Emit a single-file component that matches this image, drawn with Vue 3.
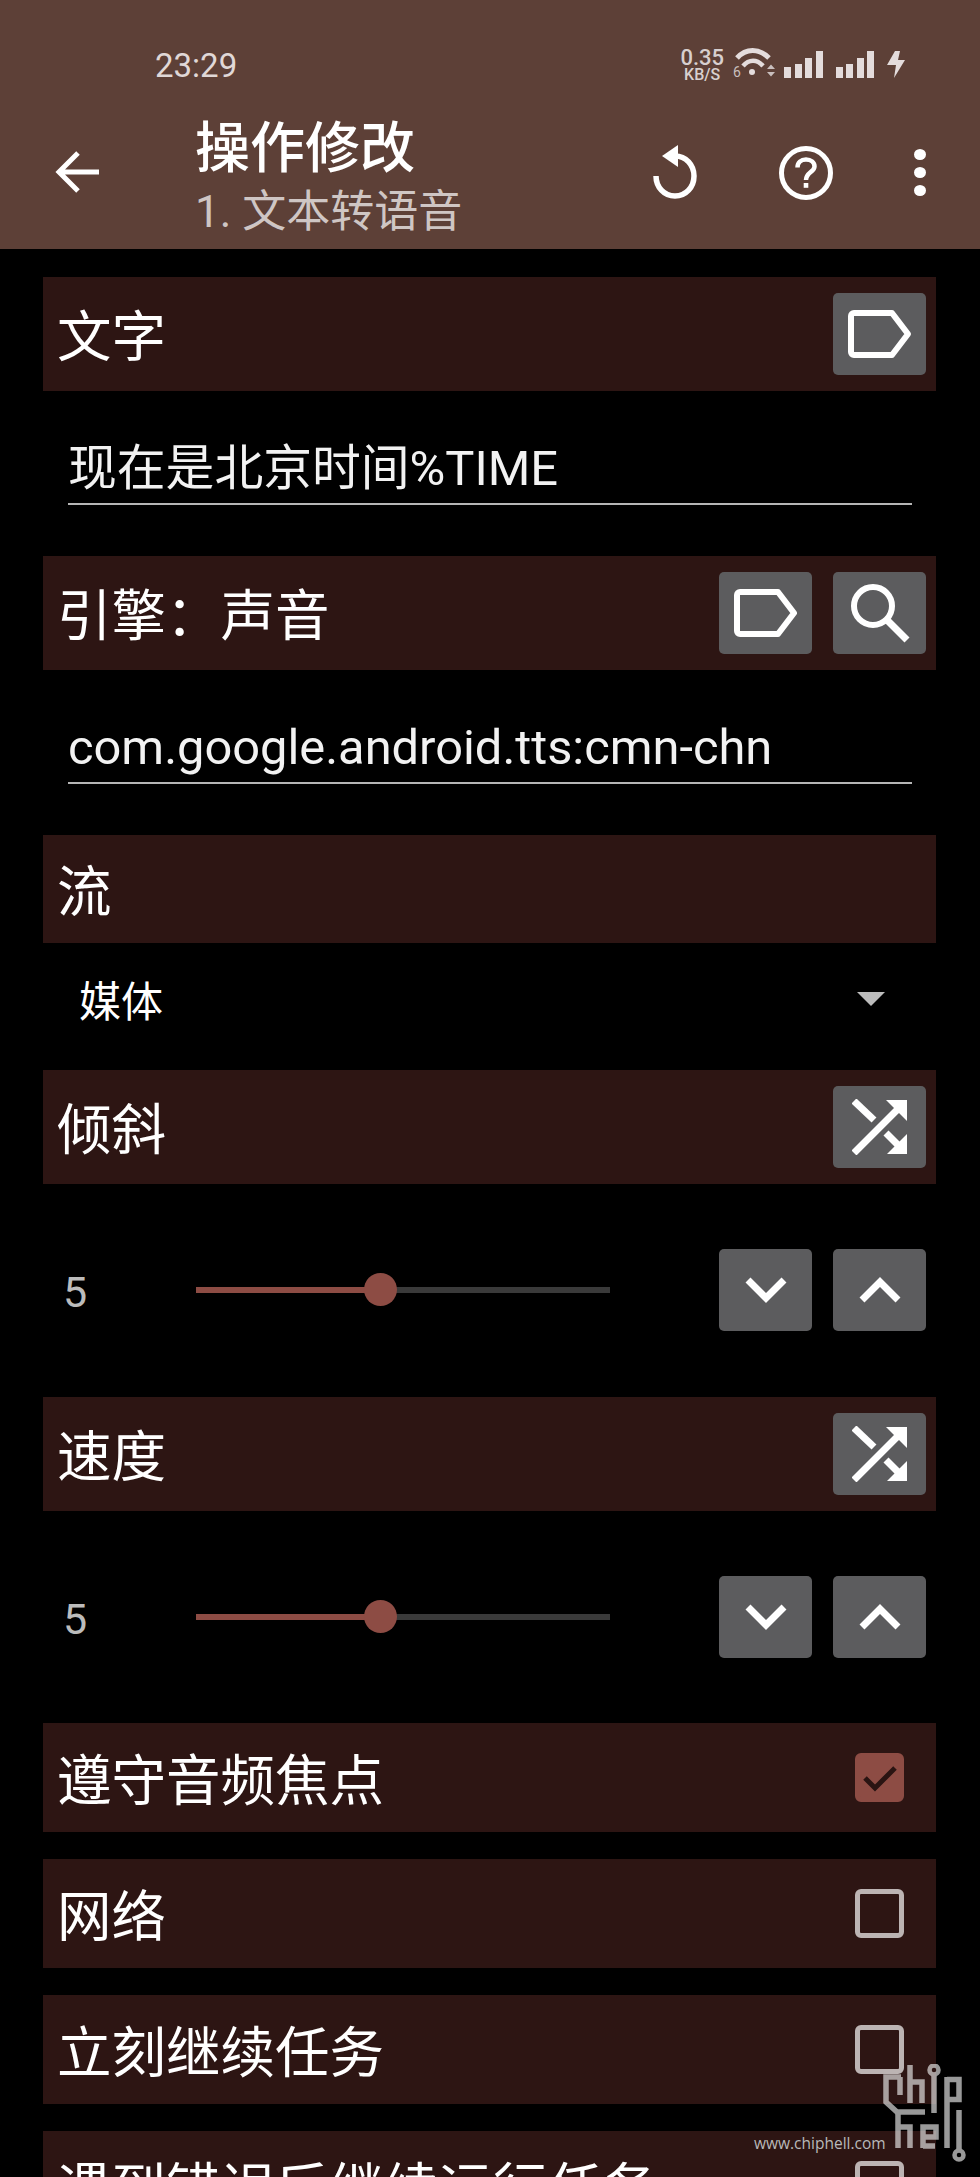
<template>
  <div class="page">
    <header class="head">
      <div class="status">
        <span class="time">23:29</span>
        <div class="status-right">
          <div class="speed"><span class="sp-num">0.35</span><span class="sp-unit">KB/S</span></div>
          <svg class="wifi" width="42" height="32" viewBox="0 0 42 32">
            <path d="M3 12C12 2 25 2 35 12" fill="none" stroke="#e4dcdc" stroke-width="5" />
            <path d="M9 20C15 13 23 13 29 20" fill="none" stroke="#e4dcdc" stroke-width="4.500" />
            <circle cx="18" cy="26" r="3" fill="#e4dcdc" />
            <path d="M33 23h8l-4-4.500zM33 26h8l-4 4.500z" fill="#c9bfbe" />
            <text x="-1" y="31" class="six">6</text>
          </svg>
          <div class="bars"><i style="height:11px"></i><i style="height:14px"></i><i style="height:20px"></i><i style="height:27px"></i></div>
          <div class="bars"><i style="height:11px"></i><i style="height:14px"></i><i style="height:20px"></i><i style="height:27px"></i></div>
          <svg width="18" height="27" viewBox="0 0 18 27"><path d="M8 0h5l-2 9h7L7 27l2-13H0z" fill="#e4dcdc" /></svg>
        </div>
      </div>
      <div class="toolbar">
        <svg class="back" width="44" height="42" viewBox="0 0 44 42">
          <path d="M44 21H4M23 2L4 21l19 19" fill="none" stroke="#fff" stroke-width="5" />
        </svg>
        <div class="titles">
          <div class="title">操作修改</div>
          <div class="subtitle">1. 文本转语音</div>
        </div>
        <svg class="undo" width="44" height="54" viewBox="0 0 44 54">
          <path d="M22 11C33 11 41 20 41 31C41 42 33 51 22 51C11 51 3 42 3 31" fill="none" stroke="#fff" stroke-width="5.500" />
          <path d="M25 0V22L9 11z" fill="#fff" />
        </svg>
        <svg class="help" width="54" height="54" viewBox="0 0 54 54">
          <circle cx="27" cy="27" r="24.500" fill="none" stroke="#fff" stroke-width="5" />
          <path d="M18.500 21.500C18.500 16.500 22 13.500 27 13.500C32 13.500 35.500 16.500 35.500 20.500C35.500 26 27 26.500 27 34" fill="none" stroke="#fff" stroke-width="4.500" />
          <rect x="24.700" y="37" width="4.600" height="4.800" fill="#fff" />
        </svg>
        <div class="dots"><i></i><i></i><i></i></div>
      </div>
    </header>

    <main class="body">
      <div class="row tall">
        <span class="label">文字</span>
        <div class="btns">
          <button class="btn"><svg width="64" height="48" viewBox="0 0 64 48"><path d="M6 3H44L60 24L44 45H6A3 3 0 0 1 3 42V6A3 3 0 0 1 6 3Z" fill="none" stroke="#fff" stroke-width="6" stroke-linejoin="round" /></svg></button>
        </div>
      </div>
      <div class="field">
        <div class="input">现在是北京时间%TIME</div>
      </div>

      <div class="row tall">
        <span class="label">引擎：声音</span>
        <div class="btns">
          <button class="btn"><svg width="64" height="48" viewBox="0 0 64 48"><path d="M6 3H44L60 24L44 45H6A3 3 0 0 1 3 42V6A3 3 0 0 1 6 3Z" fill="none" stroke="#fff" stroke-width="6" stroke-linejoin="round" /></svg></button>
          <button class="btn"><svg width="60" height="60" viewBox="0 0 60 60"><circle cx="23" cy="23" r="19" fill="none" stroke="#fff" stroke-width="6" /><path d="M37 37L57 57" fill="none" stroke="#fff" stroke-width="7" /></svg></button>
        </div>
      </div>
      <div class="field">
        <div class="input">com.google.android.tts:cmn-chn</div>
      </div>

      <div class="row">
        <span class="label">流</span>
      </div>
      <div class="select">
        <span>媒体</span>
        <i class="caret"></i>
      </div>

      <template v-for="item in sliders" :key="item.label">
        <div class="row tall">
          <span class="label">{{ item.label }}</span>
          <div class="btns">
            <button class="btn">
              <svg width="56" height="56" viewBox="0 0 56 56">
                <path d="M2 2L22 21" fill="none" stroke="#fff" stroke-width="7" />
                <path d="M2 54L50 6" fill="none" stroke="#fff" stroke-width="7" />
                <path d="M34 1H55V22z" fill="#fff" />
                <path d="M34 34L50 50" fill="none" stroke="#fff" stroke-width="7" />
                <path d="M55 35V55H35z" fill="#fff" />
              </svg>
            </button>
          </div>
        </div>
        <div class="slider-row">
          <span class="value">5</span>
          <div class="track">
            <div class="fill" :style="{ width: item.pct + '%' }"></div>
            <div class="thumb"></div>
          </div>
          <div class="btns">
            <button class="btn"><svg width="42" height="26" viewBox="0 0 42 26"><path d="M3 3L21 21L39 3" fill="none" stroke="#fff" stroke-width="7" /></svg></button>
            <button class="btn"><svg width="42" height="26" viewBox="0 0 42 26"><path d="M3 23L21 5L39 23" fill="none" stroke="#fff" stroke-width="7" /></svg></button>
          </div>
        </div>
      </template>

      <div v-for="item in checks" :key="item.label" class="row check-row">
        <span class="label">{{ item.label }}</span>
        <span class="box" :class="{ on: item.on }">
          <svg v-if="item.on" width="36" height="28" viewBox="0 0 36 28"><path d="M3 14L13 24L33 4" fill="none" stroke="#2a1412" stroke-width="5" /></svg>
        </span>
      </div>
    </main>

    <div class="mark">
      <span class="mark-url">www.chiphell.com</span>
      <svg class="mark-logo" width="84" height="100" viewBox="0 0 84 100">
        <g fill="none" stroke="#e2e2e2" stroke-width="5.500">
          <path d="M18 13H3V38L14 48H42" />
          <path d="M17 13V31" />
          <path d="M27 1V39M27 18H39V39" />
          <path d="M51 11V49" />
          <path d="M64 13V84M64 15.500H76V35.500H64" />
          <path d="M15 48V84M15 63H27V84" />
          <path d="M40 84V63H53V73H40M40 82H52" />
          <path d="M76 46V86" />
        </g>
        <circle cx="51" cy="6" r="4.500" fill="none" stroke="#e2e2e2" stroke-width="4.500" />
        <circle cx="76" cy="91" r="4.500" fill="none" stroke="#e2e2e2" stroke-width="4.500" />
      </svg>
    </div>
  </div>
</template>

<script setup>
const sliders = [
  { label: '倾斜', pct: 44 },
  { label: '速度', pct: 44 },
]

const checks = [
  { label: '遵守音频焦点', on: true },
  { label: '网络', on: false },
  { label: '立刻继续任务', on: false },
  { label: '遇到错误后继续运行任务', on: false },
]
</script>

<style>
html, body {
  margin: 0;
  background: #000;
}
</style>

<style scoped>
.page {
  position: relative;
  width: 980px;
  height: 2177px;
  overflow: hidden;
  background: #000;
  color: #fff;
  font-family: Roboto, "Noto Sans CJK SC", sans-serif;
}
.head {
  height: 249px;
  background: #5d4037;
  box-sizing: border-box;
}
.status {
  display: flex;
  justify-content: space-between;
  align-items: center;
  height: 86px;
  padding: 44px 75px 0 155px;
  box-sizing: border-box;
}
.time {
  font-size: 33px;
  color: #e0d8d7;
}
.status-right {
  display: flex;
  align-items: flex-end;
  gap: 10px;
  height: 34px;
  margin-top: -8px;
}
.speed {
  display: flex;
  flex-direction: column;
  align-items: center;
  height: 34px;
  margin-bottom: -4px;
  color: #d8d0cf;
  font-weight: 500;
}
.sp-num { font-size: 22px; line-height: 20px; }
.sp-unit { font-size: 16px; line-height: 14px; }
.six {
  font-family: Roboto, sans-serif;
  font-size: 14px;
  fill: #c9bfbe;
}
.wifi {
  margin-right: -2px;
  overflow: visible;
}
.bars {
  display: flex;
  align-items: flex-end;
  gap: 3.5px;
  height: 27px;
  margin-right: 3px;
}
.bars i {
  display: block;
  width: 7px;
  background: #e4dcdc;
}
.toolbar {
  display: flex;
  align-items: center;
  height: 163px;
  padding-left: 55px;
}
.back {
  margin-top: 8px;
}
.titles {
  margin: 22px 0 0 99px;
  flex: 1;
}
.title {
  font-size: 55px;
  font-weight: 500;
  line-height: 66px;
  margin-left: -3px;
}
.subtitle {
  font-size: 44px;
  line-height: 62px;
  margin-left: -3px;
  color: #cfc6c4;
}
.undo { margin-top: 8px; }
.help { margin: 10px 0 0 82px; }
.dots {
  display: flex;
  flex-direction: column;
  gap: 7px;
  margin: 10px 54px 0 81px;
}
.dots i {
  display: block;
  width: 12px;
  height: 11px;
  border-radius: 50%;
  background: #fff;
}
.body {
  padding: 28px 44px 0 43px;
}
.row {
  display: flex;
  align-items: center;
  justify-content: space-between;
  height: 108px;
  padding: 0 10px 0 14px;
  background: #2d1513;
}
.row.tall {
  height: 114px;
}
.label {
  padding-top: 7px;
  font-size: 54.500px;
  line-height: 1;
}
.btns {
  display: flex;
  gap: 21px;
}
.btn {
  display: flex;
  align-items: center;
  justify-content: center;
  width: 93px;
  height: 82px;
  padding: 0;
  border: 0;
  border-radius: 5px;
  background: #5c5c5e;
}
.field {
  height: 165px;
  padding: 0 24px 0 25px;
  box-sizing: border-box;
}
.input {
  height: 114px;
  box-sizing: border-box;
  padding: 45px 0 0;
  font-size: 48.800px;
  line-height: 66px;
  color: #f2f2f2;
  border-bottom: 2px solid #b5b5b5;
}
.select {
  display: flex;
  align-items: center;
  justify-content: space-between;
  height: 127px;
  padding: 0 51px 16px 36px;
  box-sizing: border-box;
  font-size: 42px;
}
.caret {
  display: block;
  border-left: 14px solid transparent;
  border-right: 14px solid transparent;
  border-top: 14px solid #bcbcbc;
}
.slider-row {
  display: flex;
  align-items: center;
  height: 212.500px;
  padding-right: 10px;
}
.value {
  width: 153px;
  padding: 4px 0 0 20px;
  box-sizing: border-box;
  font-size: 43px;
  color: #bcbcbc;
}
.track {
  position: relative;
  width: 414px;
  height: 6px;
  margin-right: 109px;
  background: #3a3a3a;
}
.fill {
  height: 100%;
  background: #8d4c44;
}
.thumb {
  position: absolute;
  left: 168px;
  top: -14px;
  width: 33px;
  height: 33px;
  border-radius: 50%;
  background: #8d4c44;
}
.check-row {
  height: 109px;
  margin-bottom: 27px;
  padding-right: 32px;
}
.box {
  display: flex;
  align-items: center;
  justify-content: center;
  width: 49px;
  height: 49px;
  box-sizing: border-box;
  border: 5px solid #bcb4b3;
  border-radius: 6px;
}
.box.on {
  border-color: #8d4c44;
  background: #8d4c44;
}
.mark {
  position: absolute;
  left: 750px;
  top: 2064px;
  width: 230px;
  height: 113px;
}
.mark-url {
  position: absolute;
  left: 4px;
  top: 68px;
  font-family: "Open Sans", sans-serif;
  font-size: 15.500px;
  color: #b9b9b9;
  white-space: nowrap;
}
.mark-logo {
  position: absolute;
  left: 133px;
  top: 0;
  opacity: 0.68;
}
</style>
